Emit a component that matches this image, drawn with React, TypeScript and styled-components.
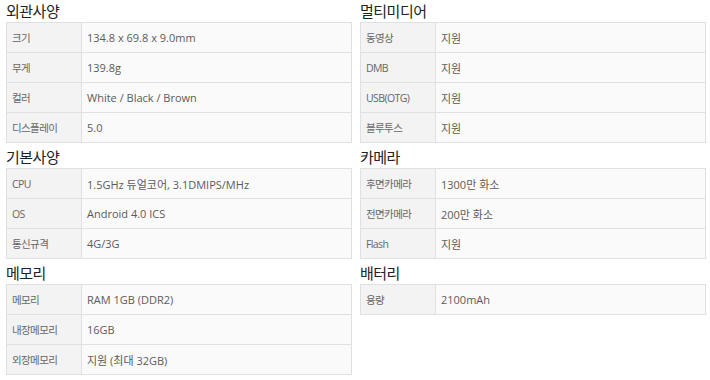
import React from 'react';
import styled, { createGlobalStyle } from 'styled-components';

const GlobalStyle = createGlobalStyle`
    body {
        margin: 0;
        background: #fff;
        font-family: 'Open Sans', 'Noto Sans CJK KR', sans-serif;
    }
`;

const StyledPage = styled.div`
    display: grid;
    grid-template-columns: 346px 346px;
    column-gap: 8px;
    align-items: start;
    padding: 0 6px;
`;

const StyledSection = styled.section<{ first?: boolean }>`
    margin-top: ${({ first }) => (first ? 0 : 3)}px;
`;

const StyledTitle = styled.h3`
    margin: 0;
    height: 22px;
    font-family: 'Noto Sans CJK KR', sans-serif;
    font-size: 15px;
    line-height: 21px;
    font-weight: 400;
    color: #222;
    letter-spacing: -0.5px;
`;

const StyledTable = styled.div`
    border: 1px solid #e0e0e0;
    border-bottom: 0;
`;

const StyledRow = styled.div`
    display: grid;
    grid-template-columns: 75px 1fr;
    height: 29px;
    border-bottom: 1px solid #e0e0e0;
`;

const StyledLabel = styled.div`
    display: flex;
    align-items: center;
    padding-left: 5px;
    background: #f3f3f3;
    border-right: 1px solid #e0e0e0;
    font-size: 10.5px;
    color: #666;
    letter-spacing: -0.6px;
`;

const StyledValue = styled.div`
    display: flex;
    align-items: center;
    padding-left: 5px;
    background: #fafafa;
    font-size: 11px;
    color: #5a5a5a;
`;

type Spec = { title: string; rows: [string, string][] };

const specs: Spec[] = [
    {
        title: '외관사양',
        rows: [
            ['크기', '134.8 x 69.8 x 9.0mm'],
            ['무게', '139.8g'],
            ['컬러', 'White / Black / Brown'],
            ['디스플레이', '5.0'],
        ],
    },
    {
        title: '멀티미디어',
        rows: [
            ['동영상', '지원'],
            ['DMB', '지원'],
            ['USB(OTG)', '지원'],
            ['블루투스', '지원'],
        ],
    },
    {
        title: '기본사양',
        rows: [
            ['CPU', '1.5GHz 듀얼코어, 3.1DMIPS/MHz'],
            ['OS', 'Android 4.0 ICS'],
            ['통신규격', '4G/3G'],
        ],
    },
    {
        title: '카메라',
        rows: [
            ['후면카메라', '1300만 화소'],
            ['전면카메라', '200만 화소'],
            ['Flash', '지원'],
        ],
    },
    {
        title: '메모리',
        rows: [
            ['메모리', 'RAM 1GB (DDR2)'],
            ['내장메모리', '16GB'],
            ['외장메모리', '지원 (최대 32GB)'],
        ],
    },
    {
        title: '배터리',
        rows: [['용량', '2100mAh']],
    },
];

export default function App() {
    return (
        <>
            <GlobalStyle />
            <StyledPage>
                {specs.map((spec, i) => (
                    <StyledSection key={spec.title} first={i < 2}>
                        <StyledTitle>{spec.title}</StyledTitle>
                        <StyledTable>
                            {spec.rows.map(([label, value]) => (
                                <StyledRow key={label}>
                                    <StyledLabel>{label}</StyledLabel>
                                    <StyledValue>{value}</StyledValue>
                                </StyledRow>
                            ))}
                        </StyledTable>
                    </StyledSection>
                ))}
            </StyledPage>
        </>
    );
}
